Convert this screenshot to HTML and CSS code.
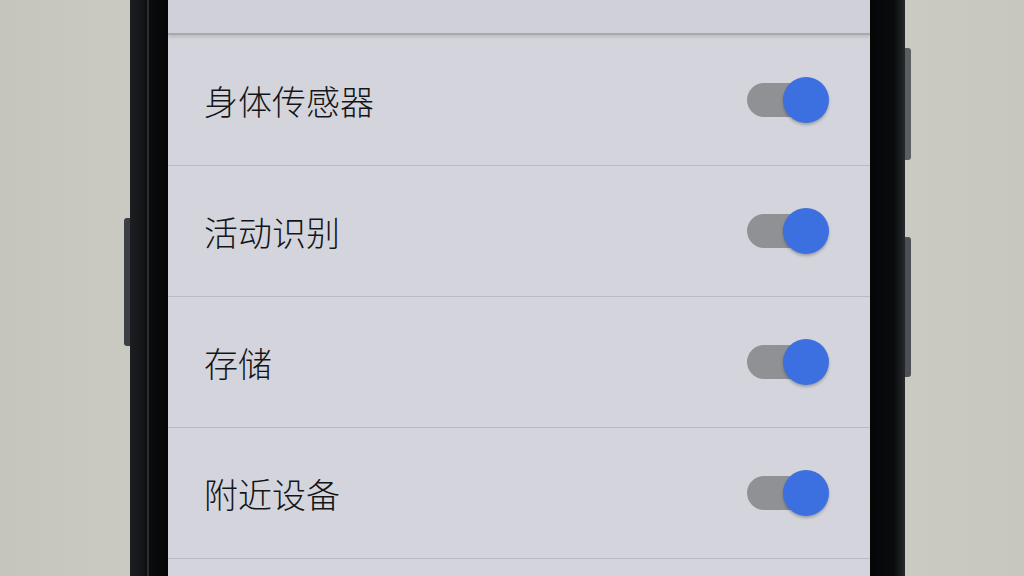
FILE: index.html
```html
<!DOCTYPE html>
<html lang="zh-CN">
<head>
    <meta charset="UTF-8">
    <meta name="viewport" content="width=device-width, initial-scale=1.0">
    <title>权限</title>
    <link rel="stylesheet" href="styles.css">
</head>
<body>
    <div class="wall wall-left">
        <span class="side-key key-left"></span>
    </div>

    <div class="phone">
        <div class="bezel bezel-left"></div>

        <main class="screen">
            <div class="screen-header"></div>

            <div class="perm-row">
                <span class="perm-label">身体传感器</span>
                <span class="switch is-on"><span class="thumb"></span></span>
            </div>
            <div class="perm-row">
                <span class="perm-label">活动识别</span>
                <span class="switch is-on"><span class="thumb"></span></span>
            </div>
            <div class="perm-row">
                <span class="perm-label">存储</span>
                <span class="switch is-on"><span class="thumb"></span></span>
            </div>
            <div class="perm-row">
                <span class="perm-label">附近设备</span>
                <span class="switch is-on"><span class="thumb"></span></span>
            </div>
        </main>

        <div class="bezel bezel-right"></div>
    </div>

    <div class="wall wall-right">
        <span class="side-key key-power"></span>
        <span class="side-key key-volume"></span>
    </div>
</body>
</html>
```

FILE: styles.css
```css
body {
    margin: 0;
    height: 576px;
    display: flex;
    overflow: hidden;
    background-color: #c9c8c0;
    font-family: "Noto Sans CJK SC", "Noto Sans", sans-serif;
}

.wall {
    display: flex;
    flex-direction: column;
}

.wall-left {
    width: 130px;
    align-items: flex-end;
    padding-top: 218px;
    background: linear-gradient(90deg, #c6c5bc, #cbcac2);
}

.wall-right {
    flex: 1;
    padding-top: 48px;
    background: linear-gradient(90deg, #cbcac2, #c8c7be);
}

.side-key {
    display: block;
    width: 6px;
    background-color: #3b3f43;
    border-radius: 3px;
}

.key-left {
    height: 128px;
    border-radius: 3px 0 0 3px;
}

.key-power {
    height: 112px;
    margin-bottom: 77px;
    border-radius: 0 3px 3px 0;
    background-color: #5a5e61;
}

.key-volume {
    height: 140px;
    border-radius: 0 3px 3px 0;
    background-color: #4c5054;
}

/* phone body */

.phone {
    display: flex;
}

.bezel-left {
    width: 38px;
    background: linear-gradient(90deg, #1c1f21 0, #121416 14px, #0b0d0e 17px, #4e5254 18px, #0a0b0c 19px, #050606 100%);
}

.bezel-right {
    width: 35px;
    background: linear-gradient(90deg, #050606 0, #0a0b0c 24px, #181b1d 30px, #25292b 100%);
}

.screen {
    width: 702px;
    display: flex;
    flex-direction: column;
    background-color: #d4d5dc;
}

.screen-header {
    height: 33px;
    background-color: #d0d1d8;
    border-bottom: 2px solid #a8a9b0;
    box-shadow: 0 2px 3px rgba(0, 0, 0, 0.12);
}

.perm-row {
    height: 130px;
    display: flex;
    align-items: center;
    justify-content: space-between;
    padding: 0 41px 0 36px;
    border-bottom: 1px solid #babbc2;
}

.perm-label {
    font-size: 34px;
    font-weight: 300;
    color: #141518;
}

/* toggle */

.switch {
    position: relative;
    width: 72px;
    height: 34px;
    margin-right: 10px;
    border-radius: 17px;
    background-color: #8f9194;
}

.switch .thumb {
    position: absolute;
    top: -6px;
    right: -10px;
    width: 46px;
    height: 46px;
    border-radius: 50%;
    background-color: #3c6fe0;
    box-shadow: 0 2px 3px rgba(0, 0, 0, 0.25);
}
```
